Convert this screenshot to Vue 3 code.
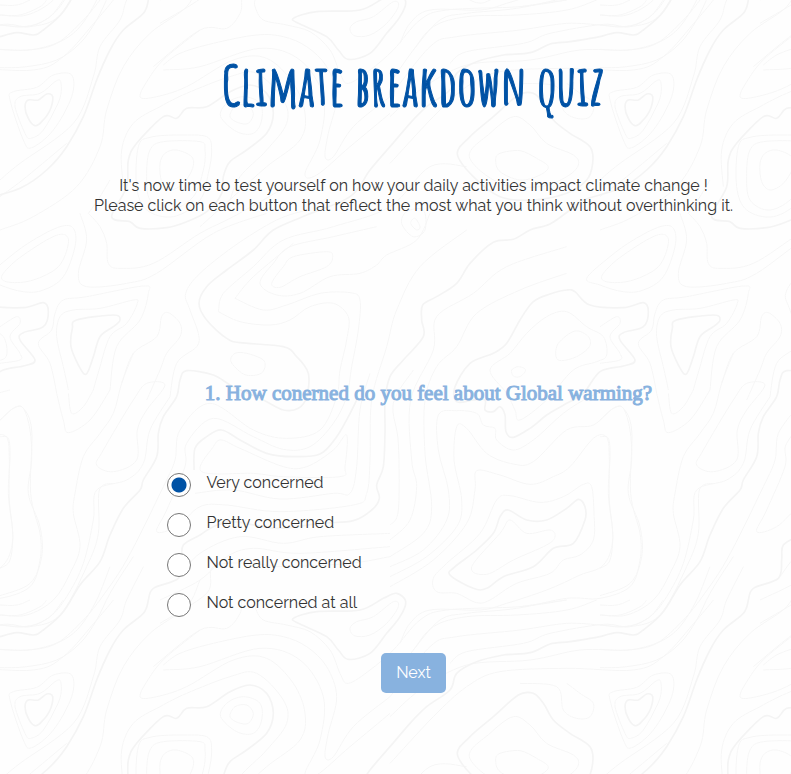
<script setup>
import { ref } from 'vue'

const options = ['Very concerned', 'Pretty concerned', 'Not really concerned', 'Not concerned at all']
const answer = ref(options[0])

// Contour lines of the topographic background. One tile is 1800 x 1800 units;
// a trailing "z" closes the line.
const major = [
  '1800,110 1770,115 1710,125 1650,132 1590,158 1510,165 1430,185 1370,220 1350,270 1280,320 1230,370 1170,440 1110,510 1050,590 920,645 820,690 760,750 680,810 620,860 597,910 620,960 680,1015 720,1028 850,1040 890,1070 925,1120 920,1190 895,1225 850,1230 790,1200 700,1160 640,1125 560,1112 540,1140 530,1190 490,1250 475,1300 470,1370 430,1440 420,1470 370,1525 330,1605 300,1685 240,1755 190,1835 130,1890 100,1905 50,1898 0,1910',
  '2245,0 2230,40 2170,90 2130,150 2090,240 2050,350 2000,440 1940,510 1860,565 1750,600 1710,630 1650,672 1590,690 1540,718 1480,727 1410,790 1370,850 1310,890 1268,915 1265,960 1270,1010 1210,1080 1170,1130 1155,1200 1155,1300 1150,1400 1130,1455 1138,1495 1115,1530 1060,1562 960,1570 830,1585 700,1565 640,1580 600,1605 550,1635 545,1680 535,1735 460,1765 445,1800',
  '582,1410 585,1345 620,1310 665,1290 720,1320 800,1360 880,1370 960,1362 1010,1310 1045,1250 1070,1200',
  '335,650 390,665 420,685 500,683 560,665 620,635 665,580 670,530 690,485 740,450 800,400 820,340 800,280 750,255 690,275 620,320 560,325 530,355 490,350 410,430 385,480 380,560 z',
  '75,320 85,300 115,300 140,282 158,290 150,330 125,365 105,377 85,355 z',
  '1555,285 1600,280 1630,310 1660,360 1710,400 1770,440 1778,490 1760,540 1700,580 1600,600 1500,590 1420,530 1372,462 1410,410 1480,350 z',
  '230,960 340,945 360,960 340,980 300,1010 280,1070 258,1123 235,1095 213,1040 217,985 z',
  '1700,870 1725,875 1770,915 1870,923 1930,908 1945,935 1930,980 1870,998 1860,1020 1905,1080 1870,1098 1800,1115 1750,1180 1700,1210 1640,1245 1590,1285 1540,1312 1518,1295 1515,1245 1500,1220 1480,1235 1455,1230 1455,1200 1420,1200 1370,1205 1365,1160 1410,1090 1480,1060 1520,1030 1560,960 1600,905 1650,882 z',
  '1350,1725 1365,1700 1430,1650 1480,1600 1500,1550 1525,1530 1580,1560 1640,1560 1700,1525 1735,1498 1755,1520 1755,1560 1720,1630 1660,1645 1600,1700 1510,1730 1460,1765 1420,1765 z',
  '880,55 950,35 1080,30 1150,-5 1190,-20 1217,5 1200,50 1160,100 1110,160 1045,178 1015,150 980,110 900,72 z'
]

const minor = [
  '45,320 60,290 120,280 165,245 182,245 178,300 130,390 92,415 75,400 z',
  '30,300 40,275 110,262 160,225 215,225 215,290 160,390 95,443 70,420 z',
  '0,15 50,15 90,0',
  '0,45 60,45 120,20 140,0',
  '0,75 90,78 150,50 190,0',
  '0,148 90,150 180,125 240,80 290,0 330,-100',
  '0,203 80,200 170,180 240,130 290,60 330,-20 400,-130',
  '0,1845 80,1845 160,1800 210,1720 240,1640 220,1540 225,1480 250,1370 300,1300 340,1240 365,1150 400,1060',
  '290,1395 310,1350 400,1200 440,1150 495,1155 440,1230 412,1290 410,1380 340,1415 z',
  '0,1875 80,1880 150,1850 200,1790 250,1690 280,1560 290,1470 380,1440 430,1390 450,1290 510,1190',
  '0,1310 25,1315 30,1370 25,1480 38,1600 30,1680 0,1705',
  '0,1260 40,1225 70,1225 90,1290 95,1380 85,1480 120,1580 125,1670 90,1750 0,1787',
  '170,1180 190,1260 205,1298 270,1260 330,1170',
  '205,1180 215,1240 250,1220 280,1170',
  '1300,1735 1340,1690 1440,1600 1490,1500 1530,1487 1620,1507 1690,1490 1750,1453 1775,1460 1782,1540 1780,1620 1740,1665 1690,1680 1650,1720 1550,1750 1470,1800 1430,1808 1370,1780 1310,1775 z',
  '1415,1700 1500,1600 1530,1560 1580,1600 1650,1590 1665,1610 1640,1635 1540,1680 1460,1723 z',
  '1170,1760 1300,1680 1400,1570 1425,1470 1430,1412 1500,1425 1590,1453 1660,1430 1710,1400 1780,1315 1820,1312 1828,1380 1828,1500 1838,1620 1810,1695 1740,1725 1640,1770 1520,1810 1440,1830 1290,1830 1230,1870 1200,1930',
  '1170,1730 1280,1670 1370,1580 1385,1500 1362,1380 1370,1280 1400,1285 1460,1360 1540,1392 1600,1385 1700,1290 1780,1275 1840,1225 1870,1225 1895,1290 1892,1480 1920,1600 1920,1680 1890,1760 1800,1795 1700,1795 1550,1825 1400,1840 1320,1860 1240,1950',
  '1170,1700 1270,1650 1340,1560 1345,1470 1315,1350 1315,1245 1370,1232 1430,1240 1450,1275 1485,1285 1490,1320 1540,1350 1600,1320 1690,1240 1770,1190 1830,1170',
  '1170,1670 1270,1600 1295,1520 1275,1360 1275,1200 1310,1100 1370,1040 1430,940 1560,870 1700,820',
  '1170,1620 1230,1560 1250,1460 1235,1380 1232,1200 1300,1050 1310,950 1420,880 1520,800 1700,740',
  '1170,1575 1195,1530 1195,1330 1180,1210 1240,1110',
  '1760,835 1830,770 1900,720 1980,680 2020,685 2025,740 1990,830 1930,870 1870,875 1800,855 z',
  '1805,830 1850,780 1940,720 1990,703 2005,730 1975,800 1900,840 1830,847 z',
  '1470,1110 1530,1060 1580,1000 1640,950 1700,935 1760,980 1810,1010 1820,1065 1790,1085 1720,1110 1640,1200 1560,1260 1545,1230 1520,1180 z',
  '1668,1070 1675,1030 1725,993 1765,1010 1768,1040 1730,1070 1685,1082 z',
  '1535,1110 1555,1100 1577,1110 1560,1130 1540,1128 z',
  '1050,85 1070,65 1120,50 1180,5 1195,20 1160,70 1110,105 1065,108 z',
  '765,0 765,20 790,60 860,75 930,95 990,150 1020,220 1045,250 1110,210 1180,150 1260,60 1340,30 1560,20 1700,0',
  '1700,1800 1560,1820',
  '1170,250 1240,150 1300,80 1400,50 1550,45 1700,30 1790,0',
  '1170,290 1290,140 1370,110 1560,90 1700,70 1800,75',
  '490,195 540,160 640,130 770,105 850,110 920,140 980,200 1010,290 985,400 975,470 1000,470 1060,380 1170,290',
  '490,210 600,200 780,145 900,180 970,290 960,420 915,520 950,525 1050,440 1170,340',
  '600,90 500,170 450,230 420,290 470,290 560,260 700,180 800,175 880,250 915,340 900,420 800,500 700,590 600,680',
  '460,200 600,90 680,85 720,40 725,0',
  '370,560 365,450 400,370 480,320 560,280 690,230 770,220 850,300 860,370 800,450 720,530 690,600',
  '690,350 705,320 740,315 760,340 745,370 715,368 z',
  '662,350 680,310 730,290 780,310 785,360 760,400 710,395 z',
  '480,490 495,460 530,450 575,470 578,505 550,550 510,570 485,545 z',
  '450,450 490,425 600,425 615,450 610,510 580,590 510,630 450,600 440,520 z',
  '415,440 450,412 540,405 620,410 635,450 625,520 600,600 520,650 440,630 410,560 z',
  '0,690 100,650 230,560 300,440 320,330 370,200 450,100 560,20 600,-60',
  '0,540 60,490 220,370 280,230 300,140 360,60 380,0 430,-100',
  '0,590 80,530 200,430',
  '265,640 300,680 320,730 325,790 360,805 460,790 600,700 700,650 860,560',
  '265,640 300,590 330,540',
  '240,640 260,720 235,820 260,860 380,850 470,820 640,700 800,640',
  '655,935 670,880 760,800 850,720 1000,680 1170,620 1290,500 1400,500',
  '655,935 720,965 810,975 870,960 930,920 1000,910 1045,950 1040,1020 1020,1110 1010,1190 960,1290 860,1315 760,1290 630,1210 540,1290 525,1380 490,1460 380,1680 300,1800',
  '815,850 850,800 880,770 980,755 998,770 980,800 900,830 840,862 z',
  '1130,680 1000,710 870,740 820,790 780,850 830,885 900,880 990,830 1080,820 1130,795 1160,765 1250,720 1290,640',
  '705,895 790,930 860,915 960,880 1050,878 1080,900 1075,990 1055,1100 1040,1190 1000,1270 930,1340 850,1348 760,1310 640,1255 560,1330 555,1400 500,1530 470,1595 530,1580 600,1520 680,1515 840,1535 1060,1515 1100,1480 1110,1380 1115,1200 1160,1040 1190,930 1260,800 1400,690',
  '705,895 760,830 880,730',
  '693,1085 705,1060 740,1060 790,1080 792,1110 770,1125 730,1122 z',
  '205,1170 190,1100 170,1010 180,950 220,930 300,925 400,900 412,910 380,970 330,1010 300,1100 280,1170',
  '170,1180 150,1090 115,1030 155,990 165,940 190,900 260,890 430,858 445,880 420,960 350,1040 330,1170',
  '365,1150 400,1060 470,1010 485,950 505,938 540,970 540,1010 500,1060 480,1110 440,1200',
  '920,630 830,660 700,740 600,820 557,880 570,930 595,1000 590,1040 530,1090 510,1190',
  '0,980 50,950 60,970 30,1010 60,1060 60,1080 0,1090',
  '605,1415 640,1340 665,1320 720,1345 850,1400 920,1400 1000,1350 1040,1305 1035,1400 1020,1430 850,1430 760,1420 z',
  '585,1480 700,1470 840,1497 1000,1480 1050,1480 1070,1400 1080,1230 1110,1120',
  '540,1730 600,1660 720,1610 850,1630 960,1610 1170,1600',
  '480,1800 600,1740 680,1670 760,1645 900,1660 1170,1640',
  '480,1870 620,1780 640,1700 750,1690 850,1700 1050,1690 1170,1670',
  '1350,1990 1400,1955 1570,1930 1650,1900 1810,1873 1890,1880 1980,1845 2060,1700 2095,1600 2098,1470 2140,1450',
  '1170,350 1260,270 1400,195 1590,180 1740,150 1880,150 1970,130 2050,60 2100,0',
  '1170,490 1300,350 1400,260 1500,215 1700,205 1900,210 1990,170 2090,60 2140,0',
  '1408,470 1470,400 1540,350 1590,375 1640,430 1720,465 1735,495 1700,530 1620,560 1500,550 z',
  '1487,480 1500,460 1560,452 1610,475 1645,500 1620,525 1560,540 1500,515 z',
  '1700,250 1740,280 1780,310 1770,350 1730,355 1690,330 1670,260 1560,250',
  '1232,670 1245,655 1260,680 1250,690 z',
  '1205,670 1220,635 1270,630 1275,690 1240,710 z'
]

// Turns a list of points into a smooth cubic path through them.
function smooth(line) {
  const closed = line.endsWith('z')
  const p = line.replace(' z', '').split(' ').map((s) => s.split(',').map(Number))
  const n = p.length
  const at = (i) => (closed ? p[(i + n) % n] : p[Math.max(0, Math.min(n - 1, i))])
  let d = `M${p[0]}`
  for (let i = 0; i < (closed ? n : n - 1); i++) {
    const [a, b, c, e] = [at(i - 1), at(i), at(i + 1), at(i + 2)]
    const c1 = [b[0] + (c[0] - a[0]) / 6, b[1] + (c[1] - a[1]) / 6]
    const c2 = [c[0] - (e[0] - b[0]) / 6, c[1] - (e[1] - b[1]) / 6]
    d += `C${c1.map(Math.round)} ${c2.map(Math.round)} ${c}`
  }
  return d
}

const majorPath = major.map(smooth).join('')
const minorPath = minor.map(smooth).join('')
const shifts = [-1800, 0, 1800]
</script>

<template>
  <div class="page">
    <svg class="contours" aria-hidden="true">
      <defs>
        <g id="contour-lines" fill="none">
          <path class="minor" :d="minorPath" />
          <path class="major" :d="majorPath" />
        </g>
        <pattern id="contour-tile" width="600" height="600" patternUnits="userSpaceOnUse" viewBox="0 0 1800 1800">
          <template v-for="y in shifts" :key="y">
            <use v-for="x in shifts" :key="x" href="#contour-lines" :x="x" :y="y" />
          </template>
        </pattern>
      </defs>
      <rect width="100%" height="100%" fill="url(#contour-tile)" />
    </svg>

    <main class="quiz">
      <h1 class="title">Climate breakdown quiz</h1>
      <p class="intro">
        It's now time to test yourself on how your daily activities impact climate change !<br />
        Please click on each button that reflect the most what you think without overthinking it.
      </p>
      <form class="form" @submit.prevent>
        <fieldset class="question">
          <legend class="legend">1. How conerned do you feel about Global warming?</legend>
          <div class="options">
            <label v-for="option in options" :key="option" class="option">
              <input v-model="answer" class="radio" type="radio" name="concern" :value="option" />
              <span class="option-text">{{ option }}</span>
            </label>
          </div>
        </fieldset>
        <button class="next" type="submit">Next</button>
      </form>
    </main>
  </div>
</template>

<style>
body {
  margin: 0;
  background: #fefefe;
}
</style>

<style scoped>
.page {
  position: relative;
  box-sizing: border-box;
  min-height: 100vh;
  padding-left: 36px;
  color: #333;
  font-family: Raleway, Lato, sans-serif;
  font-size: 16px;
  font-weight: 400;
  line-height: 20px;
}

.contours {
  position: absolute;
  inset: 0;
  width: 100%;
  height: 100%;
}

.minor {
  stroke: #f6f6f6;
  stroke-width: 3;
}

.major {
  stroke: #f4f4f4;
  stroke-width: 5;
}

.quiz {
  position: relative;
  padding-top: 48px;
  text-align: center;
}

.title {
  margin: 0;
  color: #0052a5;
  font-family: 'Amatic SC', 'Roboto Condensed', sans-serif;
  font-size: 55px;
  font-weight: 700;
  line-height: 74px;
  -webkit-text-stroke: 1px #0052a5;
}

.intro {
  margin: 54px 0 0;
}

.form {
  margin-top: 163px;
}

.question {
  margin: 0;
  padding: 0;
  border: 0;
}

.legend {
  width: 100%;
  box-sizing: border-box;
  padding: 0 0 0 30px;
  color: #88b2df;
  font-family: 'Liberation Serif', serif;
  font-size: 21px;
  font-weight: 400;
  line-height: 28px;
  -webkit-text-stroke: 1px #88b2df;
}

.options {
  display: flex;
  flex-direction: column;
  gap: 16px;
  width: 494px;
  max-width: 100%;
  margin: 66px auto 0;
}

.option {
  display: flex;
  gap: 16px;
  text-align: left;
}

.option-text {
  line-height: 20px;
}

.radio {
  appearance: none;
  box-sizing: border-box;
  width: 24px;
  height: 24px;
  margin: 0;
  border: 1px solid #777;
  border-radius: 50%;
  background: #fff;
}

.radio:checked {
  background: radial-gradient(circle, #0052a5 7px, #fff 8px);
}

.next {
  margin-top: 36px;
  padding: 10px 15px;
  border: 0;
  border-radius: 5px;
  background: #88b2df;
  color: #fff;
  font: inherit;
}
</style>
